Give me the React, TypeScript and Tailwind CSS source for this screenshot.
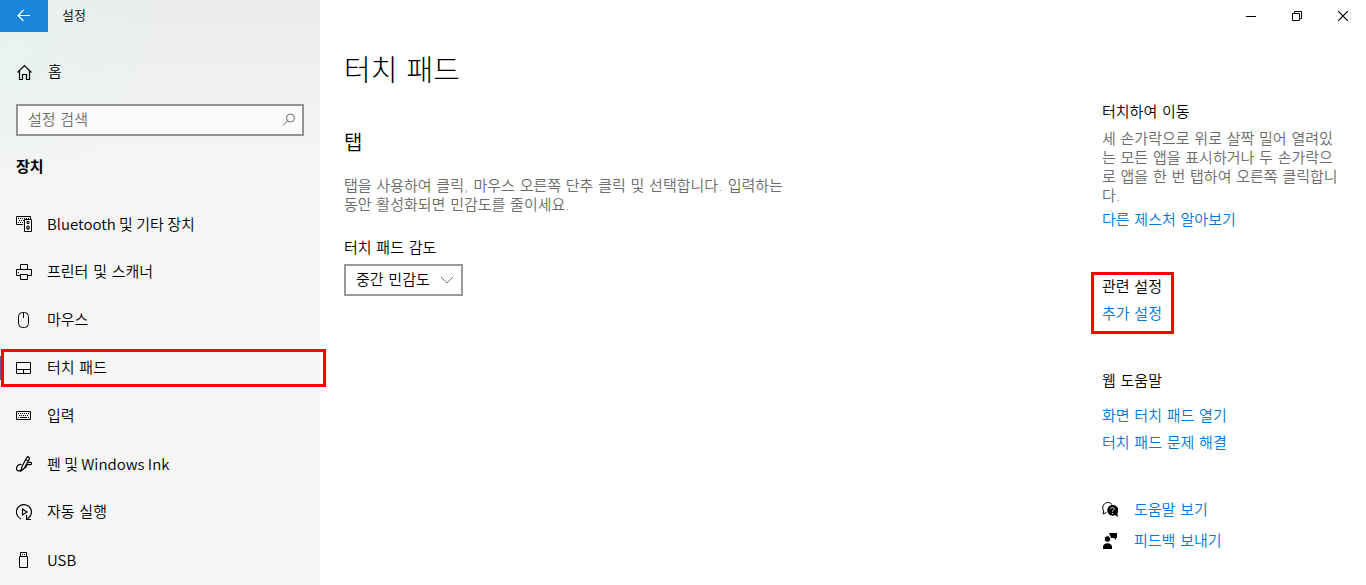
import type { ReactNode } from "react";
import clsx from "clsx";

interface IconProps {
  size?: number;
  children: ReactNode;
}

function Icon({ size = 16, children }: IconProps) {
  return (
    <svg width={size} height={size} viewBox={`0 0 ${size} ${size}`} fill="none" stroke="currentColor" aria-hidden="true" className="shrink-0">
      {children}
    </svg>
  );
}

const navItems = [
  {
    label: "Bluetooth 및 기타 장치",
    latin: true,
    icon: (
      <Icon>
        <path d="M7 8.500H.5v-8h14V3" />
        <path d="M2 2.500h11M3 4.500h5M2 6.500h5" strokeDasharray="1 1" />
        <path d="M8.500 3.500h7v12h-7z" />
        <circle cx="12" cy="11.500" r="1.500" fill="#888888" />
        <path d="M11 5.500h2v2h-2zM11.500 13.500h1" />
      </Icon>
    ),
  },
  {
    label: "프린터 및 스캐너",
    icon: (
      <Icon>
        <path d="M4.500 5V.5h7V5M4.500 11.500h-4v-6h15v6h-4M4.500 10.500h7v5h-7zM2 8.500h1" />
      </Icon>
    ),
  },
  {
    label: "마우스",
    icon: (
      <Icon>
        <rect x="2.500" y=".5" width="10" height="15" rx="4" />
        <path d="M7.500 1v5" />
      </Icon>
    ),
  },
  {
    label: "터치 패드",
    current: true,
    icon: (
      <Icon>
        <path d="M.5 2.500h14v11H.5zM.5 9.500h14M7.500 9.500v4" />
      </Icon>
    ),
  },
  {
    label: "입력",
    icon: (
      <Icon>
        <path d="M.5 3.500h14v8H.5z" />
        <path d="M2 5.500h11M3 7.500h10" strokeDasharray="1 1" />
        <path d="M2 9.500h1M4 9.500h7M12 9.500h1" />
      </Icon>
    ),
  },
  {
    label: "펜 및 Windows Ink",
    latin: true,
    icon: (
      <Icon>
        <path d="M5 15 6 10.500 10.500 2c1-1.800 3.500-1 2.800 1L8.500 12zM9.500 3.500l3 1.500M11.500 1.500l1.500-1" strokeWidth="1.200" />
        <path d="M5.500 8.500C2.500 8 .5 10 .5 12.500c0 3 3 3 4.500 1.500M12 6.500c2.500-1 4.500.5 3 2-1 .8-2.500-.8-4 .2-1.200.8-.5 2.300-1.500 3.300" strokeWidth="1.200" />
      </Icon>
    ),
  },
  {
    label: "자동 실행",
    icon: (
      <Icon>
        <path d="M5 15A7.500 7.500 0 1 1 11.500 14.700M10.500 11v4.500H15M6.500 5v6l4.500-3z" strokeWidth="1.200" />
      </Icon>
    ),
  },
  {
    label: "USB",
    latin: true,
    icon: (
      <Icon>
        <path d="M4.500 4.500v-4h6v4M3.500 4.500h8v11h-8zM6 2.500h1M8 2.500h1" />
      </Icon>
    ),
  },
];

function Sidebar() {
  return (
    <div className="flex w-80 shrink-0 flex-col bg-[#f6f6f6] bg-[radial-gradient(circle_at_0_40px,#e8f3ee,transparent_160px),linear-gradient(#e9ebed,#f6f6f6_170px)]">
      <header className="flex h-8 items-center">
        <button type="button" aria-label="뒤로" className="flex h-8 w-12 items-center justify-center bg-[#1a86db] text-white">
          <Icon>
            <path d="M14 7.500H2M7.500 2 2 7.500 7.500 13" strokeWidth="1.200" />
          </Icon>
        </button>
        <span className="pl-3.5 text-[13px]">설정</span>
      </header>

      <a href="#home" className="mt-4 flex h-12 items-center gap-4 px-4">
        <Icon>
          <path d="M1.500 8.500 8.500 1.500l7 7M3.500 7v8.500h3v-5h4v5h3V7" strokeWidth="1.200" />
        </Icon>
        홈
      </a>

      <div className="mx-4 mt-2 flex h-8 items-center border-2 border-[#929292] bg-[#fbfbfb] pr-[5px] pl-2.5 text-[#6e6e6e]">
        <input type="search" aria-label="설정 검색" placeholder="설정 검색" className="min-w-0 flex-1 bg-transparent outline-none placeholder:text-[#6e6e6e]" />
        <Icon>
          <circle cx="9.500" cy="6" r="4" />
          <path d="M6.500 9 2 13.500" />
        </Icon>
      </div>

      <h2 className="mt-[15px] mb-[17px] flex h-8 items-center px-4 font-bold">장치</h2>

      <nav>
        <ul>
          {navItems.map((item) => (
            <li key={item.label} className="relative">
              <a href="#" aria-current={item.current ? "page" : undefined} className="flex h-12 items-center gap-[15px] px-4">
                {item.icon}
                <span className={clsx("pt-px", item.latin && "font-['Noto_Sans_CJK_KR',sans-serif]")}>{item.label}</span>
              </a>
              {item.current && (
                <>
                  <span className="absolute top-3 left-0 h-6 w-1 bg-[#7a4a9a]" />
                  <span className="pointer-events-none absolute top-[5px] -right-1.5 bottom-[5px] left-px border-3 border-[#ff0000]" />
                </>
              )}
            </li>
          ))}
        </ul>
      </nav>
    </div>
  );
}

function WindowControls() {
  return (
    <div className="flex h-8 justify-end">
      <button type="button" aria-label="최소화" className="flex w-[46px] items-center justify-center">
        <Icon size={10}>
          <path d="M0 5.500h10" />
        </Icon>
      </button>
      <button type="button" aria-label="이전 크기로 복원" className="flex w-[46px] items-center justify-center">
        <Icon size={10}>
          <path d="M.5 2.500h7v7h-7zM2.500 2V.5h7v7H8" />
        </Icon>
      </button>
      <button type="button" aria-label="닫기" className="flex w-[46px] items-center justify-center">
        <Icon size={10}>
          <path d="m0 0 10 10M10 0 0 10" strokeWidth="1.200" />
        </Icon>
      </button>
    </div>
  );
}

function RelatedPanel() {
  return (
    <aside className="w-[240px] shrink-0 pt-[71px] leading-[19px]">
      <section>
        <h3>터치하여 이동</h3>
        <p className="mt-2 text-[#6b6b6b]">
          세 손가락으로 위로 살짝 밀어 열려있는 모든 앱을 표시하거나 두 손가락으로 앱을 한 번 탭하여 오른쪽 클릭합니다.
        </p>
        <a href="#gestures" className="mt-[5px] block text-[#0078d7]">다른 제스처 알아보기</a>
      </section>

      <section className="relative mt-12 w-fit">
        <h3>관련 설정</h3>
        <a href="#additional" className="mt-2 block text-[#0078d7]">추가 설정</a>
        <span className="pointer-events-none absolute -top-1.5 -right-3 -bottom-2.5 -left-[11px] border-3 border-[#ff0000]" />
      </section>

      <section className="mt-12">
        <h3>웹 도움말</h3>
        <a href="#open" className="mt-4 block text-[#0078d7]">화면 터치 패드 열기</a>
        <a href="#fix" className="mt-2 block text-[#0078d7]">터치 패드 문제 해결</a>
      </section>

      <section className="mt-12 flex flex-col gap-3">
        <a href="#help" className="flex items-center gap-4 text-[#0078d7]">
          <span className="pb-0.5 text-black">
            <Icon>
              <path d="M4.500 10.500 1 12l.8-3A5 5 0 1 1 10 2.500" />
              <path d="M10.500 3a5.300 5.300 0 1 0 2.500 10l3 2-.7-3.500A5.300 5.300 0 0 0 10.500 3z" fill="currentColor" stroke="none" />
              <path d="M8.800 7c0-2 3.400-2 3.400 0 0 1.200-1.700 1.200-1.700 2.700M10.500 11v1" stroke="white" />
            </Icon>
          </span>
          도움말 보기
        </a>
        <a href="#feedback" className="flex items-center gap-4 text-[#0078d7]">
          <span className="pb-0.5 text-black">
            <Icon>
              <path d="M7 0h8v5h-1v2l-2-2H9zM1 16v-2c0-5 9-5 9 0v2z" fill="currentColor" stroke="none" />
              <circle cx="5.500" cy="6" r="3.300" fill="currentColor" stroke="white" />
            </Icon>
          </span>
          피드백 보내기
        </a>
      </section>
    </aside>
  );
}

function TouchpadSettings() {
  return (
    <main className="min-w-0 flex-1 pt-[17px]">
      <h1 className="text-[29px] leading-[44px] font-light">터치 패드</h1>
      <h2 className="mt-9 text-xl leading-7">탭</h2>
      <p className="mt-5 max-w-[450px] leading-[19px] text-[#6b6b6b]">
        탭을 사용하여 클릭, 마우스 오른쪽 단추 클릭 및 선택합니다. 입력하는 동안 활성화되면 민감도를 줄이세요.
      </p>
      <label htmlFor="sensitivity" className="mt-6 block leading-[19px]">터치 패드 감도</label>
      <div className="relative mt-1.5 w-fit">
        <select id="sensitivity" defaultValue="medium" className="h-8 w-[119px] appearance-none border-2 border-[#999999] bg-white pl-2.5">
          <option value="low">낮은 민감도</option>
          <option value="medium">중간 민감도</option>
          <option value="high">높은 민감도</option>
        </select>
        <span className="pointer-events-none absolute inset-y-0 right-2 flex items-center text-[#777777]">
          <Icon>
            <path d="m2 5 6 6 6-6" />
          </Icon>
        </span>
      </div>
    </main>
  );
}

export default function App() {
  return (
    <div className="flex min-h-screen bg-white font-['DejaVu_Sans','Noto_Sans_CJK_KR',sans-serif] text-[15px] font-[350] text-black">
      <Sidebar />
      <div className="flex min-w-0 flex-1 flex-col">
        <WindowControls />
        <div className="flex gap-6 pr-6 pl-6">
          <TouchpadSettings />
          <RelatedPanel />
        </div>
      </div>
    </div>
  );
}
